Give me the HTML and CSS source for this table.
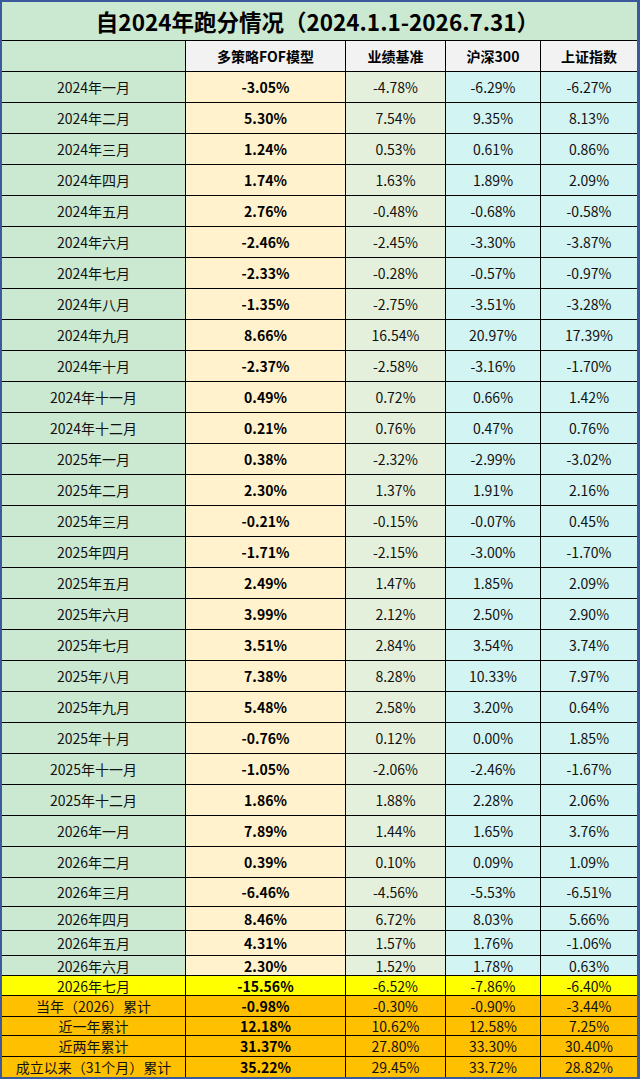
FILE: index.html
```html
<!DOCTYPE html>
<html lang="zh-CN">
<head>
<meta charset="utf-8">
<title>自2024年跑分情况</title>
<link rel="stylesheet" href="styles.css">
</head>
<body>
<div class="sheet">
  <div class="title">自2024年跑分情况（2024.1.1-2026.7.31）</div>
  <div class="row head h31">
    <div class="c lab"></div><div class="c">多策略FOF模型</div><div class="c">业绩基准</div><div class="c">沪深300</div><div class="c">上证指数</div>
  </div>
  <div class="row h31"><div class="c lab">2024年一月</div><div class="c fof">-3.05%</div><div class="c bm">-4.78%</div><div class="c ix">-6.29%</div><div class="c ix">-6.27%</div></div>
  <div class="row h31"><div class="c lab">2024年二月</div><div class="c fof">5.30%</div><div class="c bm">7.54%</div><div class="c ix">9.35%</div><div class="c ix">8.13%</div></div>
  <div class="row h31"><div class="c lab">2024年三月</div><div class="c fof">1.24%</div><div class="c bm">0.53%</div><div class="c ix">0.61%</div><div class="c ix">0.86%</div></div>
  <div class="row h31"><div class="c lab">2024年四月</div><div class="c fof">1.74%</div><div class="c bm">1.63%</div><div class="c ix">1.89%</div><div class="c ix">2.09%</div></div>
  <div class="row h31"><div class="c lab">2024年五月</div><div class="c fof">2.76%</div><div class="c bm">-0.48%</div><div class="c ix">-0.68%</div><div class="c ix">-0.58%</div></div>
  <div class="row h31"><div class="c lab">2024年六月</div><div class="c fof">-2.46%</div><div class="c bm">-2.45%</div><div class="c ix">-3.30%</div><div class="c ix">-3.87%</div></div>
  <div class="row h31"><div class="c lab">2024年七月</div><div class="c fof">-2.33%</div><div class="c bm">-0.28%</div><div class="c ix">-0.57%</div><div class="c ix">-0.97%</div></div>
  <div class="row h31"><div class="c lab">2024年八月</div><div class="c fof">-1.35%</div><div class="c bm">-2.75%</div><div class="c ix">-3.51%</div><div class="c ix">-3.28%</div></div>
  <div class="row h31"><div class="c lab">2024年九月</div><div class="c fof">8.66%</div><div class="c bm">16.54%</div><div class="c ix">20.97%</div><div class="c ix">17.39%</div></div>
  <div class="row h31"><div class="c lab">2024年十月</div><div class="c fof">-2.37%</div><div class="c bm">-2.58%</div><div class="c ix">-3.16%</div><div class="c ix">-1.70%</div></div>
  <div class="row h31"><div class="c lab">2024年十一月</div><div class="c fof">0.49%</div><div class="c bm">0.72%</div><div class="c ix">0.66%</div><div class="c ix">1.42%</div></div>
  <div class="row h31"><div class="c lab">2024年十二月</div><div class="c fof">0.21%</div><div class="c bm">0.76%</div><div class="c ix">0.47%</div><div class="c ix">0.76%</div></div>
  <div class="row h31"><div class="c lab">2025年一月</div><div class="c fof">0.38%</div><div class="c bm">-2.32%</div><div class="c ix">-2.99%</div><div class="c ix">-3.02%</div></div>
  <div class="row h31"><div class="c lab">2025年二月</div><div class="c fof">2.30%</div><div class="c bm">1.37%</div><div class="c ix">1.91%</div><div class="c ix">2.16%</div></div>
  <div class="row h31"><div class="c lab">2025年三月</div><div class="c fof">-0.21%</div><div class="c bm">-0.15%</div><div class="c ix">-0.07%</div><div class="c ix">0.45%</div></div>
  <div class="row h31"><div class="c lab">2025年四月</div><div class="c fof">-1.71%</div><div class="c bm">-2.15%</div><div class="c ix">-3.00%</div><div class="c ix">-1.70%</div></div>
  <div class="row h31"><div class="c lab">2025年五月</div><div class="c fof">2.49%</div><div class="c bm">1.47%</div><div class="c ix">1.85%</div><div class="c ix">2.09%</div></div>
  <div class="row h31"><div class="c lab">2025年六月</div><div class="c fof">3.99%</div><div class="c bm">2.12%</div><div class="c ix">2.50%</div><div class="c ix">2.90%</div></div>
  <div class="row h31"><div class="c lab">2025年七月</div><div class="c fof">3.51%</div><div class="c bm">2.84%</div><div class="c ix">3.54%</div><div class="c ix">3.74%</div></div>
  <div class="row h31"><div class="c lab">2025年八月</div><div class="c fof">7.38%</div><div class="c bm">8.28%</div><div class="c ix">10.33%</div><div class="c ix">7.97%</div></div>
  <div class="row h31"><div class="c lab">2025年九月</div><div class="c fof">5.48%</div><div class="c bm">2.58%</div><div class="c ix">3.20%</div><div class="c ix">0.64%</div></div>
  <div class="row h31"><div class="c lab">2025年十月</div><div class="c fof">-0.76%</div><div class="c bm">0.12%</div><div class="c ix">0.00%</div><div class="c ix">1.85%</div></div>
  <div class="row h31"><div class="c lab">2025年十一月</div><div class="c fof">-1.05%</div><div class="c bm">-2.06%</div><div class="c ix">-2.46%</div><div class="c ix">-1.67%</div></div>
  <div class="row h31"><div class="c lab">2025年十二月</div><div class="c fof">1.86%</div><div class="c bm">1.88%</div><div class="c ix">2.28%</div><div class="c ix">2.06%</div></div>
  <div class="row h31"><div class="c lab">2026年一月</div><div class="c fof">7.89%</div><div class="c bm">1.44%</div><div class="c ix">1.65%</div><div class="c ix">3.76%</div></div>
  <div class="row h31"><div class="c lab">2026年二月</div><div class="c fof">0.39%</div><div class="c bm">0.10%</div><div class="c ix">0.09%</div><div class="c ix">1.09%</div></div>
  <div class="row h29"><div class="c lab">2026年三月</div><div class="c fof">-6.46%</div><div class="c bm">-4.56%</div><div class="c ix">-5.53%</div><div class="c ix">-6.51%</div></div>
  <div class="row h24"><div class="c lab">2026年四月</div><div class="c fof">8.46%</div><div class="c bm">6.72%</div><div class="c ix">8.03%</div><div class="c ix">5.66%</div></div>
  <div class="row h25"><div class="c lab">2026年五月</div><div class="c fof">4.31%</div><div class="c bm">1.57%</div><div class="c ix">1.76%</div><div class="c ix">-1.06%</div></div>
  <div class="row h20"><div class="c lab">2026年六月</div><div class="c fof">2.30%</div><div class="c bm">1.52%</div><div class="c ix">1.78%</div><div class="c ix">0.63%</div></div>
  <div class="row h20 yellow"><div class="c lab">2026年七月</div><div class="c fof">-15.56%</div><div class="c bm">-6.52%</div><div class="c ix">-7.86%</div><div class="c ix">-6.40%</div></div>
  <div class="row h21 orange"><div class="c lab">当年（2026）累计</div><div class="c fof">-0.98%</div><div class="c bm">-0.30%</div><div class="c ix">-0.90%</div><div class="c ix">-3.44%</div></div>
  <div class="row h19 orange"><div class="c lab">近一年累计</div><div class="c fof">12.18%</div><div class="c bm">10.62%</div><div class="c ix">12.58%</div><div class="c ix">7.25%</div></div>
  <div class="row h21 orange"><div class="c lab">近两年累计</div><div class="c fof">31.37%</div><div class="c bm">27.80%</div><div class="c ix">33.30%</div><div class="c ix">30.40%</div></div>
  <div class="row h20 orange last"><div class="c lab">成立以来（31个月）累计</div><div class="c fof">35.22%</div><div class="c bm">29.45%</div><div class="c ix">33.72%</div><div class="c ix">28.82%</div></div>
</div>
</body>
</html>
```
FILE: styles.css
```css
html, body {
  margin: 0;
  padding: 0;
  background: #ffffff;
}

.sheet {
  width: 640px;
  height: 1079px;
  box-sizing: border-box;
  border-style: solid;
  border-color: #3b5a9d;
  border-width: 2px 3px 2px 2px;
  font-family: "Noto Sans CJK SC", "Noto Sans", sans-serif;
  font-size: 14px;
  color: #111111;
  display: flex;
  flex-direction: column;
}

.title {
  height: 39px;
  box-sizing: border-box;
  border-bottom: 1px solid #000;
  background: #cbe8d1;
  display: flex;
  align-items: center;
  justify-content: center;
  font-size: 22.5px;
  font-weight: 700;
  color: #000;
  line-height: 1;
  padding-right: 4px;
}

.row {
  display: grid;
  grid-template-columns: 184px 160px 100px 95px 96px;
  flex: none;
}

.h31 { height: 31px; }
.h29 { height: 29px; }
.h25 { height: 25px; }
.h24 { height: 24px; }
.h21 { height: 21px; }
.h20 { height: 20px; }
.h19 { height: 19px; }

.c {
  box-sizing: border-box;
  border-right: 1px solid #000;
  border-bottom: 1px solid #000;
  display: flex;
  align-items: center;
  justify-content: center;
  line-height: 1;
  white-space: nowrap;
  overflow: hidden;
}

.c:last-child { border-right: none; }
.last .c { border-bottom: none; }

.lab { background: #cbe8d1; }
.fof { background: #fff2cc; font-weight: 700; color: #000; }
.bm { background: #e4f0db; }
.ix { background: #d2f4f3; }

.head .c {
  background: #f2f2f2;
  font-weight: 700;
  color: #000;
}
.head .lab { background: #cbe8d1; }

.yellow .c { background: #ffff00; }
.orange .c { background: #ffc000; }
```
